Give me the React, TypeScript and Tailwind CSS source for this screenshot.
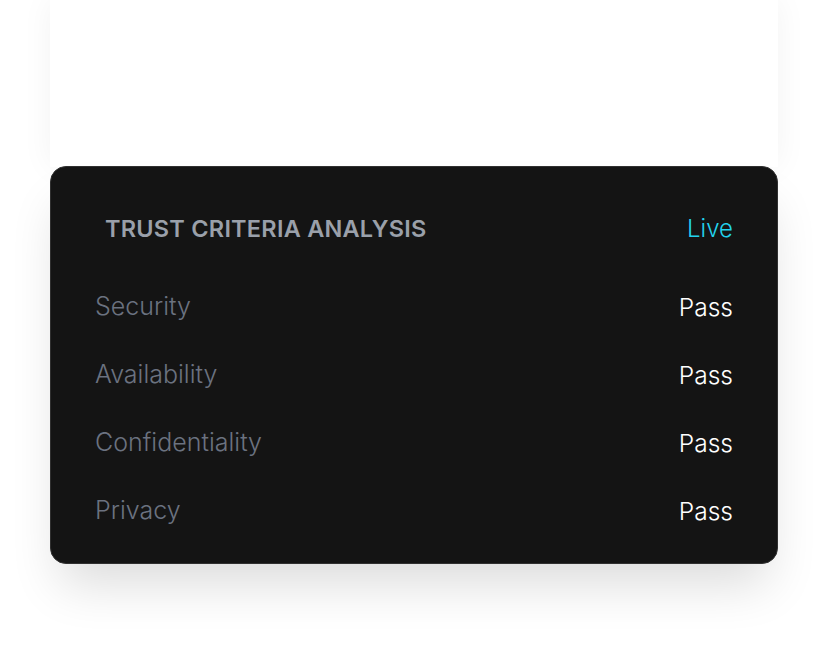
const rows = ['Security', 'Availability', 'Confidentiality', 'Privacy'];

export default function App() {
  return (
    <div className="w-[828px] h-[666px] bg-white overflow-hidden font-['Inter',sans-serif]">
      <div className="ml-[50px] w-[728px] flex flex-col">
        <div className="h-[167px] bg-white shadow-[0_0_30px_rgba(0,0,0,0.05)]" />
        <div className="relative -mt-px h-[398px] rounded-2xl border border-[#303030] bg-[#141414] shadow-[0_30px_50px_-10px_rgba(0,0,0,0.14)] px-[44px] pt-[46px] pb-[19px]">
          <div className="flex h-8 items-center justify-between pl-[10px]">
            <span className="text-[23.5px] font-semibold tracking-[0.01em] text-[#9aa0aa]">TRUST CRITERIA ANALYSIS</span>
            <span className="text-[24px] font-light text-[#22d3ee]">Live</span>
          </div>
          <div className="mt-[28px] flex flex-col">
            {rows.map((r) => (
              <div key={r} className="flex h-[68px] items-center justify-between">
                <span className="text-[25px] font-light text-[#6b7280]">{r}</span>
                <span className="text-[24.5px] font-light text-white">Pass</span>
              </div>
            ))}
          </div>
        </div>
      </div>
    </div>
  );
}
